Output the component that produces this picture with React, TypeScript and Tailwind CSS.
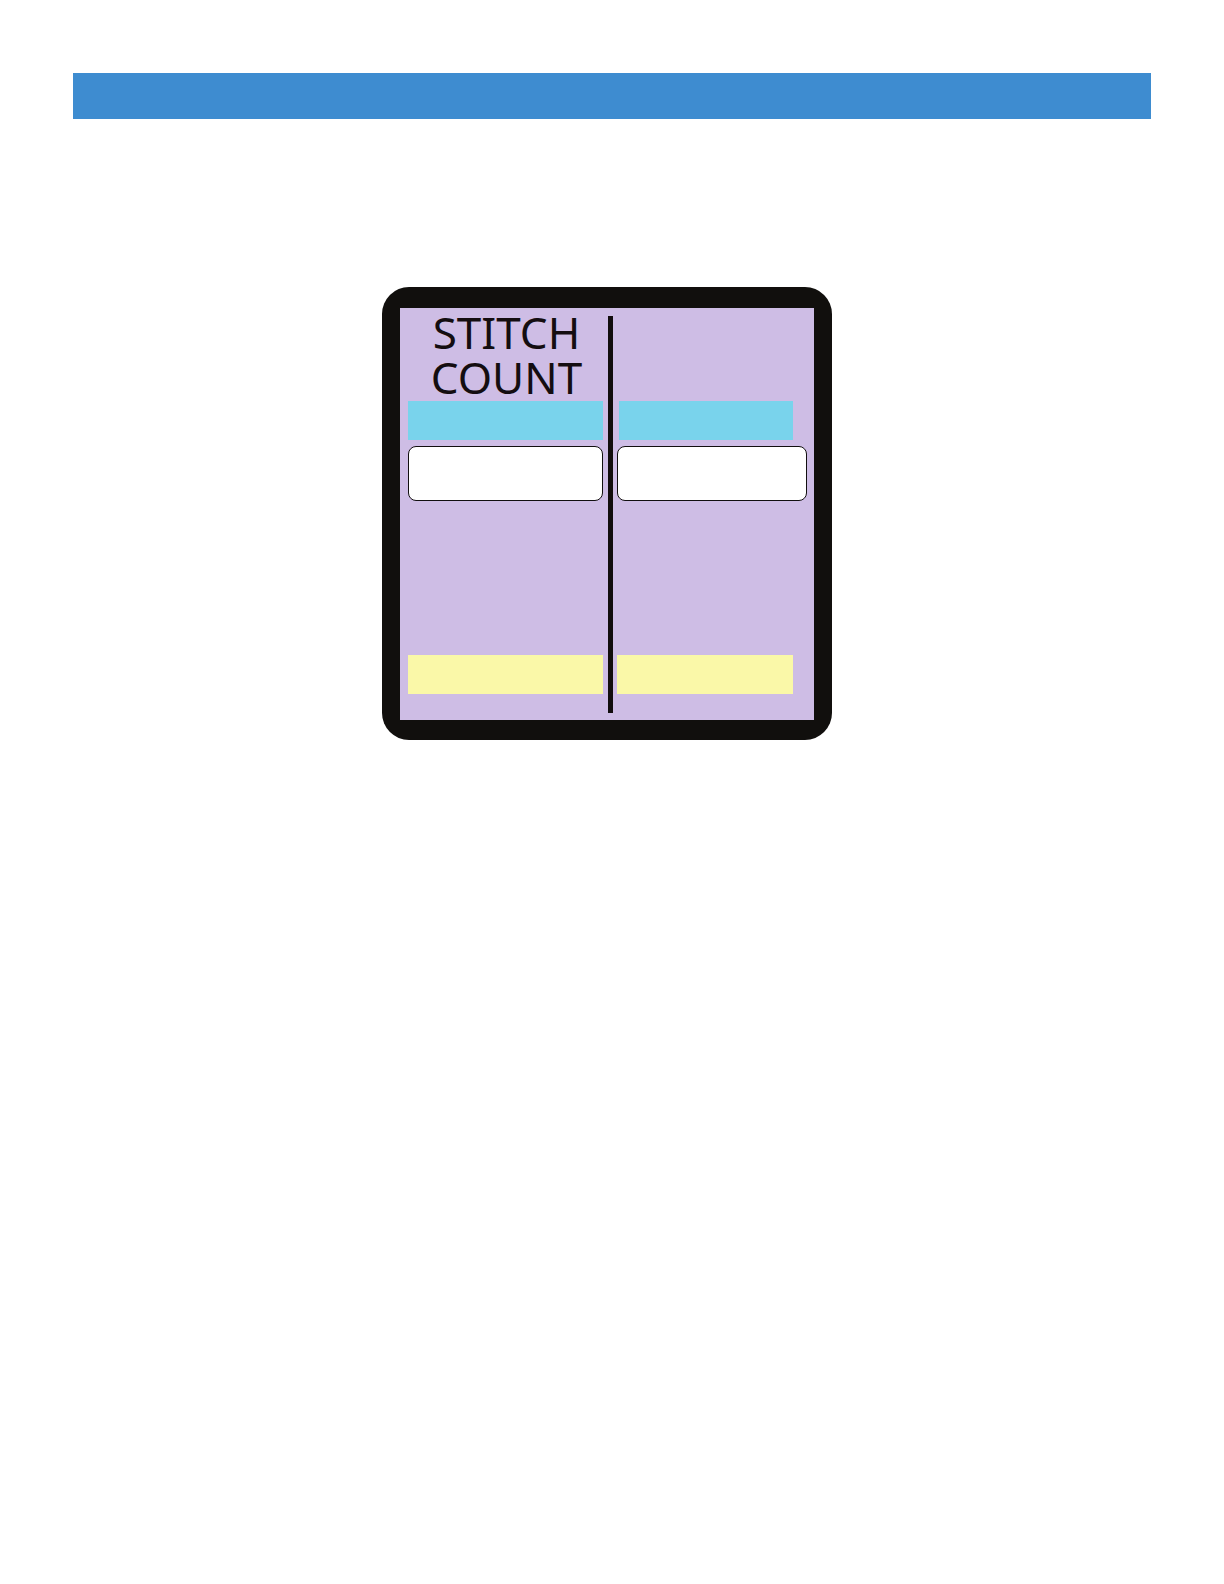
const SCREEN_FONT = "font-['Noto_Sans','Open_Sans',sans-serif]";

const StitchColumn = () => {
  return (
    <section className="flex flex-1 flex-col pl-2 pr-[5px] pt-0.5">
      <label
        htmlFor="stitch-count"
        className="h-[91px] pl-0.5 text-center text-[44px] leading-[45px] text-[#140d10]"
      >
        STITCH
        <br />
        COUNT
      </label>
      <div className="h-[39px] bg-[#79d3ec]" />
      <input
        id="stitch-count"
        type="text"
        className="mt-1.5 h-[55px] w-full rounded-lg border border-[#120f10] bg-white px-3 text-2xl outline-none"
      />
      <div className="mb-[26px] mt-auto h-[39px] bg-[#faf8a8]" />
    </section>
  );
};

const SecondColumn = () => {
  return (
    <section className="flex w-[201px] flex-col pl-1 pr-[7px] pt-[93px]">
      <div className="ml-0.5 mr-[14px] h-[39px] bg-[#79d3ec]" />
      <input
        type="text"
        aria-label="Second value"
        className="mt-1.5 h-[55px] w-full rounded-lg border border-[#120f10] bg-white px-3 text-2xl outline-none"
      />
      <div className="mb-[26px] mr-[14px] mt-auto h-[39px] bg-[#faf8a8]" />
    </section>
  );
};

const App = () => {
  return (
    <div className={`min-h-screen bg-white px-[73px] pt-[73px] ${SCREEN_FONT}`}>
      <header className="h-[46px] bg-[#3e8cd0]" />
      <main className="flex justify-center pr-[10px] pt-[168px]">
        <div className="w-full max-w-[450px] rounded-[27px] bg-[#110f0d] px-[18px] pb-5 pt-[21px]">
          <div className="flex min-h-[412px] bg-[#cebde5]">
            <StitchColumn />
            <div className="mb-[7px] mt-2 w-[5px] bg-[#120d0d]" />
            <SecondColumn />
          </div>
        </div>
      </main>
    </div>
  );
};

export default App;
